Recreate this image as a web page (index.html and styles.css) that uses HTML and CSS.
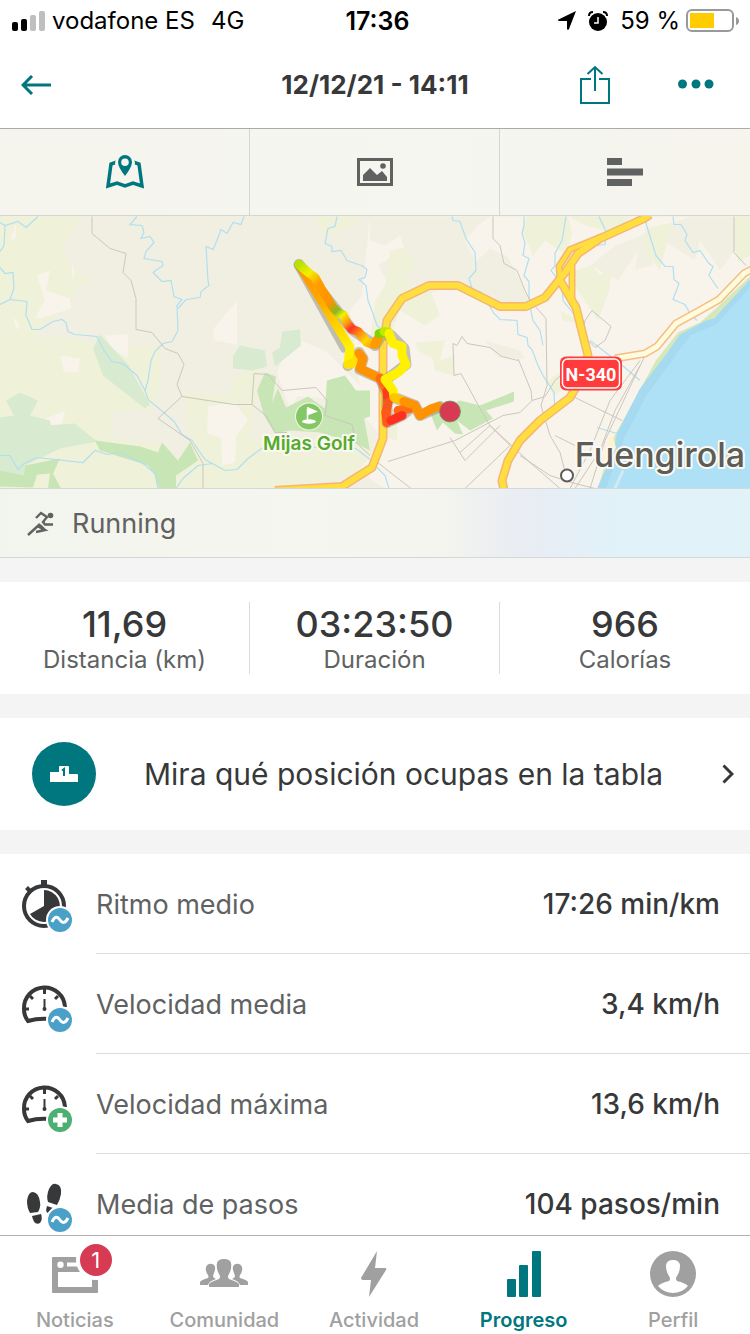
FILE: index.html
```html
<!DOCTYPE html>
<html lang="es">
<head>
  <meta charset="UTF-8" />
  <meta name="viewport" content="width=device-width, initial-scale=1.0"/>
  <title>12/12/21 - 14:11</title>
  <link rel="stylesheet" href="styles.css">
</head>
<body>

  <div class="status-bar">
    <div class="status-left">
      <svg width="34" height="20" viewBox="0 0 34 20">
        <rect x="0" y="11" width="6" height="9" rx="2"/>
        <rect x="9" y="8" width="6" height="12" rx="2"/>
        <rect x="18" y="4" width="6" height="16" rx="2" fill="#bfbfbf"/>
        <rect x="27" y="0" width="6" height="20" rx="2" fill="#bfbfbf"/>
      </svg>
      <span class="carrier">vodafone ES</span>
      <span>4G</span>
    </div>
    <div class="status-time">17:36</div>
    <div class="status-right">
      <svg width="18" height="19" viewBox="0 0 18 19"><path d="M18 0L11 18Q9.500 20 9 17.500V10H1Q-1 9.500 .500 8.500Z"/></svg>
      <svg width="20" height="20" viewBox="0 0 20 20">
        <circle cx="10" cy="11" r="9"/>
        <path d="M1 5Q1 1 5 1M19 5Q19 1 15 1" fill="none" stroke="#000" stroke-width="2"/>
        <path d="M10 6V12H6" fill="none" stroke="#fff" stroke-width="1.500"/>
      </svg>
      <span>59 %</span>
      <svg class="battery" width="53" height="24" viewBox="0 0 53 24">
        <rect x="1" y="1" width="46" height="21" rx="5" fill="none" stroke="#999" stroke-width="2"/>
        <rect x="4" y="4" width="24" height="15" fill="#ffcc00"/>
        <path d="M50 8Q53 9 53 12T50 16Z" fill="#999"/>
      </svg>
    </div>
  </div>

  <header class="header">
    <button type="button" class="icon-btn back-btn" aria-label="Atrás">
      <svg width="30" height="20" viewBox="0 0 30 20"><path d="M30 10H2M11 1L2 10l9 9" fill="none" stroke="currentColor" stroke-width="3"/></svg>
    </button>
    <h1>12/12/21 - 14:11</h1>
    <div class="header-actions">
      <button type="button" class="icon-btn" aria-label="Compartir">
        <svg width="30" height="40" viewBox="0 0 30 40"><path d="M11 14H1V38H29V14H19M15 26V2M7.500 9L15 2l7.500 7" fill="none" stroke="currentColor" stroke-width="2"/></svg>
      </button>
      <button type="button" class="icon-btn" aria-label="Más">
        <svg width="36" height="40" viewBox="0 0 36 40" fill="currentColor"><circle cx="4.500" cy="19" r="4.500"/><circle cx="18" cy="19" r="4.500"/><circle cx="31" cy="19" r="4.500"/></svg>
      </button>
    </div>
  </header>

  <main class="content">
    <section class="map">
      <svg class="map-canvas" viewBox="0 128 750 430" preserveAspectRatio="xMidYMid slice">
        <defs>
          <linearGradient id="leg" gradientUnits="userSpaceOnUse" x1="300" y1="265" x2="350" y2="347">
            <stop offset="0" stop-color="#ff9200"/><stop offset=".4" stop-color="#ffa800"/><stop offset="1" stop-color="#fff200"/>
          </linearGradient>
          <linearGradient id="out" gradientUnits="userSpaceOnUse" x1="299" y1="264" x2="375" y2="345">
            <stop offset="0" stop-color="#b5e300"/><stop offset=".12" stop-color="#f4ee00"/><stop offset=".24" stop-color="#ff9e00"/>
            <stop offset=".44" stop-color="#ff9200"/><stop offset=".54" stop-color="#86bd20"/><stop offset=".6" stop-color="#f4f000"/>
            <stop offset=".68" stop-color="#ff9a10"/><stop offset=".74" stop-color="#ff3228"/><stop offset=".82" stop-color="#ff8a10"/>
            <stop offset=".91" stop-color="#ffd800"/><stop offset="1" stop-color="#ff9a00"/>
          </linearGradient>
        </defs>

        <!-- land -->
        <rect y="128" width="750" height="430" fill="#f1efe2"/>
        <g fill="#eff1d9">
          <path d="M0 216H80L72 232 62 243 70 265 91 280 78 288 62 312 42 326 30 345 60 335 110 348 160 345 160 385 152 410 110 412 95 440 60 430 0 450Z"/>
          <path d="M0 325L50 340 105 342 150 410 190 420 185 395 240 372 262 350 250 440 285 440 370 425 372 470 275 488H0Z"/>
          <path d="M315 216H360L352 226 330 235 320 232Z"/>
        </g>
        <g fill="#f8f4ec">
          <path d="M370 216H750V488H385L358 470 385 440 350 400 290 395 278 370 300 340 325 350 360 385 350 310 362 295Z"/>
          <path d="M212 330L237 300V344L215 340Z"/>
          <path d="M37 275L50 270 46 290 70 298 71 308 40 318 35 317 45 300Z"/>
          <path d="M12 315L20 325 17 330ZM16 222V238L10 240ZM72 263L75 272 72 279Z"/>
          <path d="M105 335L128 334V358L112 348ZM60 355L80 358 78 372 64 372ZM30 425L65 410 62 425Z"/>
          <path d="M208 406L235 402 248 420 236 436 235 462 222 465 221 437 207 433Z"/>
          <path d="M277 372L290 342 310 349 322 370 305 380 290 410Z"/>
        </g>
        <g fill="#f1efe2">
          <path d="M370 216H490L478 225 465 240 475 260 450 280 405 250 400 235 385 245 370 240Z"/>
          <path d="M378 265L410 245 475 262 490 248 508 256 530 300 510 307 450 285 400 305Z"/>
          <path d="M616 245L690 216H745V235L720 270 700 240 695 260 655 235 652 265 635 269 638 250 618 280 590 265Z"/>
          <path d="M190 345H270L258 366 234 376 228 396 185 392Z"/>
          <path d="M115 410L150 408 185 395 190 445 178 460 160 442 110 440Z"/>
          <path d="M485 340L520 350 525 358 498 357Z"/>
        </g>
        <g fill="#eff1d9">
          <path d="M375 300L385 285 390 250 405 247 417 265 405 275 412 295 430 288 440 315 425 325 400 310 392 330 380 355 370 340Z"/>
          <path d="M527 216H568L572 232 567 255 545 240 533 255 522 230ZM570 216H632L612 232 585 225Z"/>
          <path d="M575 270L592 265 600 275 612 268 609 290 598 320 575 285ZM560 310L575 318 577 322 563 320Z"/>
          <path d="M645 228L672 222 660 270 645 250ZM735 216H750V255L738 262 733 240Z"/>
          <path d="M415 342L445 340 440 360 455 355 453 375 435 370 433 358 418 350ZM385 410L398 410 397 440 388 437ZM548 380L570 365 570 385 553 395Z"/>
        </g>
        <g fill="#d8ebd0">
          <path d="M93 348L100 334 128 364 150 404 145 408 103 375Z"/>
          <path d="M6 400L20 392 38 400 30 415 50 420 51 425 30 426 75 423 97 441 60 448 25 465 24 478 0 486V417L14 415Z"/>
          <path d="M233 355L240 345 265 350 267 366 252 370 233 368ZM282 331L300 329 301 345 275 366 272 352 280 347Z"/>
        </g>
        <g fill="#c8e5b6">
          <path d="M95 440L140 446 158 452 162 442 178 460 190 442 198 460 176 475 176 488H159L155 475 148 465 100 450Z"/>
          <path d="M0 470L24 475 25 465 60 458 53 473 61 488H48L50 473 37 474 33 487 0 486Z"/>
          <path d="M257 390L265 372 276 376 272 402 278 388 286 407 308 396 325 408 327 380 345 375 356 390 370 390V416L364 418 370 450 354 442 320 432 290 430 275 433 264 415Z"/>
          <path d="M430 412L460 400 480 405 514 391 514 401 486 410 493 418 470 430 457 420 463 434 455 433 443 422 437 430Z"/>
        </g>

        <!-- sea and beach -->
        <path d="M750 276L716 308 700 322 678 332 656 360 634 400 612 440 598 488H606L625 440 650 390 680 338 705 326 750 285Z" fill="#d5e8b8"/>
        <path d="M750 279L714 318 706 320 680 334 666 354 640 388 617 433 612 455 597 488H750Z" fill="#a6daf0"/>
        <path d="M750 287L716 324 690 335 672 360 647 394 624 438 606 488H750Z" fill="#aee0f6"/>
        <path d="M612 432L616 447 610 462 598 470Z" fill="#fdf3cf"/>
        <path d="M623 470L615 488" stroke="#d5eaf0" stroke-width="3"/>

        <!-- rivers -->
        <g fill="none" stroke="#b0dff0" stroke-width="1.200">
          <path d="M38 216L26 227 18 221 5 225 0 222M5 225L4 245 0 251M0 267L5 273 13 272 14 288 10 299 0 304M10 299L27 301 26 315 32 329H40L53 321 62 319 66 322 68 331 75 334 97 336 104 350 112 361 123 363 137 375 145 390 148 399 165 413 174 421 182 434 192 440 205 459 225 470 237 469 248 458 263 447 285 440 320 448 356 448 370 459"/>
          <path d="M137 216L130 224 142 225 144 232 141 238 150 236 154 242 146 251 144 258 162 261 163 265 153 272 162 281 171 280 174 296 182 299 177 305 178 330 172 341 163 343 155 351 151 360 148 380 145 390"/>
          <path d="M244 216L241 224 233 222 227 233 221 229 217 240 213 249 206 246 208 280 209 285 201 291 200 297 186 299 178 308"/>
          <path d="M337 216L335 226 328 228 325 243 332 246 332 251 341 250 347 260 358 264 362 265 367 269 365 277 359 279 366 285 368 300 373 313 377 325 388 335M388 335L380 340 383 360 378 372"/>
          <path d="M0 455H10L18 469 24 463 37 457 83 462 95 450 107 454 120 452 143 463 155 473 158 488M176 488L183 478 198 465 213 463"/>
          <path d="M452 216L453 220 460 221 466 238 475 252 476 270 469 278 472 288 481 292 484 296 494 313 500 319 517 320 518 334 527 337 528 345 532 349 538 365 543 375 554 392 555 412"/>
          <path d="M524 216V225L522 233 525 242 523 255 529 258 524 275 529 281 529 295 531 311 533 320 540 330 543 345M566 216L562 240 555 253V265L551 270 562 285 563 300 575 315M599 216L606 231 605 244 596 245"/>
          <path d="M644 216L650 236 656 255 665 266 673 266 674 279 679 283 673 299 685 304 690 313 697 320M673 216L674 224 681 224 687 234 685 240 693 252 700 250 709 263 713 266 709 275 718 288"/>
          <path d="M590 340L620 363 640 380M597 427L617 433M375 465L385 475 389 488"/>
        </g>

        <!-- minor roads -->
        <g fill="none" stroke="#cbc7bd" stroke-width="1">
          <path d="M92 216V233L110 248 126 253 123 272 131 280 136 298V329L152 332 165 348 178 353 184 364 177 384 182 396 234 404 252 404 254 373 268 374 282 390 316 387 327 400 325 415 352 424 356 442 370 455"/>
          <path d="M182 396L158 418 190 440 203 463 203 488M252 404L266 415 275 432H287"/>
          <path d="M493 216V238L500 245 504 263 517 270 525 290 530 300 546 318 547 385 541 405 550 435 560 452 566 475"/>
          <path d="M457 345L453 343 454 375 461 373 480 408 490 425 530 462 560 488M518 358L531 390 532 400 545 396 555 380 580 358"/>
          <path d="M457 345L462 336 467 343 490 347 502 356 518 360M532 400L520 412 503 415 455 440 388 461M375 460L411 488M450 437L465 460 500 425M460 452L490 425M490 425L510 445 465 488"/>
          <path d="M520 455L550 475 575 483 595 488M575 397L622 420M555 435L575 445M640 360L610 400 590 450 570 488M640 365L615 410 600 450 575 488M645 355L626 395 605 440 590 488"/>
          <path d="M585 320L592 310 611 326 605 340 595 347 583 335ZM734 216V252L746 265"/>
        </g>

        <!-- coast road -->
        <g fill="none" stroke-linejoin="round">
          <path d="M755 267L744 273 719 299 698 311 676 323 657 346 645 353 615 358" stroke="#f4bd83" stroke-width="8"/>
          <path d="M755 267L744 273 719 299 698 311 676 323 657 346 645 353 615 358" stroke="#fffbdc" stroke-width="5"/>
        </g>

        <!-- motorways -->
        <g fill="none" stroke-linejoin="round">
          <g stroke="#f5b573" stroke-width="9">
            <path d="M275 490L342 486 372 467 383 438V345L387 320 402 298 429 285H458L500 306H526L545 297 565 272 578 253 600 238 644 218 650 214"/>
            <path d="M560 280L576 307 588 355 580 380 570 397 540 420 520 440 508 460 502 480 504 490"/>
          </g>
          <path d="M560 280L559 266 570 249 602 236M572 265V298" stroke="#f5b573" stroke-width="7"/>
          <g stroke="#ffde3e" stroke-width="6">
            <path d="M275 490L342 486 372 467 383 438V345L387 320 402 298 429 285H458L500 306H526L545 297 565 272 578 253 600 238 644 218 650 214"/>
            <path d="M560 280L576 307 588 355 580 380 570 397 540 420 520 440 508 460 502 480 504 490"/>
          </g>
          <path d="M560 280L559 266 570 249 602 236M572 265V298" stroke="#ffde3e" stroke-width="4"/>
        </g>

        <!-- recorded track, coloured by speed -->
        <g fill="none" stroke-linecap="round" stroke-linejoin="round" stroke-width="9">
          <path d="M298 265L344 348" stroke="#bfbcb1" stroke-width="8"/>
          <path d="M299 264L327 298 352 329 375 345 382 334 391 335 404 348 406 364 385 380 394 397 415 405 420 415 440 406M348 365L359 352 363 358 360 369 380 378 387 393V422L402 415 410 408" stroke="#8d8a82" stroke-opacity=".5" stroke-width="11"/>
          <path d="M299 264L350 347 348 364" stroke="url(#leg)"/>
          <path d="M348 364L355 362 359 353" stroke="#ffe000"/>
          <path d="M359 353L363 358 360 368 380 378" stroke="#ff9200"/>
          <path d="M380 378L387 390" stroke="#ff6a12"/>
          <path d="M387 391L388 402" stroke="#ff3a20"/>
          <path d="M388 402L386 412" stroke="#f8581c"/>
          <path d="M386 412L387 422" stroke="#ff5818"/>
          <path d="M410 408L398 410 402 415" stroke="#ff6a12"/>
          <path d="M402 415L391 420" stroke="#ff3020"/>
          <path d="M299 264L307 271 315 277 321 288 327 297 333 307 339 313 343 314 347 323 352 329 358 331 363 337 367 342 375 344" stroke="url(#out)"/>
          <path d="M375 344L378 338" stroke="#ff9a00"/>
          <path d="M379 333L383 332" stroke="#7dd500"/>
          <path d="M384 331L389 332" stroke="#bde800"/>
          <path d="M389 333L393 343 402 346V355L406 364 398 372 385 379 393 390 394 396" stroke="#fff200"/>
          <path d="M394 397L402 400" stroke="#ffc400"/>
          <path d="M404 401L415 405 420 415 432 408 439 406" stroke="#ff9200"/>
          <circle cx="450" cy="411" r="10.500" fill="#d73a53" stroke="#6f9360" stroke-width=".8"/>
        </g>

        <!-- places -->
        <circle cx="309" cy="416" r="14" fill="#f3f6e6"/>
        <circle cx="309" cy="416" r="13" fill="#84c765"/>
        <path d="M307.500 408V421M308 407.500L316 411 308 414Z" fill="#fff" stroke="#fff" stroke-width="1.500"/>
        <ellipse cx="309" cy="421" rx="7" ry="2.200" fill="#fff"/>
        <text class="map-label golf" x="309" y="449">Mijas Golf</text>
        <rect x="560" y="356" width="62" height="34" rx="6" fill="#ff3b3b"/>
        <rect x="562.500" y="358.500" width="57" height="29" rx="5" fill="none" stroke="#fff" stroke-width="1.500"/>
        <text class="map-label road" x="591" y="380">N-340</text>
        <circle cx="567" cy="475" r="6" fill="#fff" stroke="#5d5c56" stroke-width="2"/>
        <text class="map-label city" x="660" y="466">Fuengirola</text>
      </svg>

      <nav class="view-tabs">
        <button type="button" class="active" aria-label="Mapa">
          <svg width="38" height="36" viewBox="0 0 38 36" fill="currentColor">
            <path d="M11 8L5 10 2 32 11 29 19 32 27 29 36 32 33 10 27 8" fill="none" stroke="currentColor" stroke-width="3.500"/>
            <path d="M19 -1A10 10 0 0 0 9 9Q9 15 19 26Q29 15 29 9A10 10 0 0 0 19 -1" fill="#f5f5ef"/>
            <path fill-rule="evenodd" d="M19 1A7 7 0 0 0 12 8Q12 13 19 22Q26 13 26 8A7 7 0 0 0 19 1M19 4.500a3.800 3.800 0 1 1 0 7.600a3.800 3.800 0 1 1 0-7.600"/>
          </svg>
        </button>
        <button type="button" aria-label="Fotos">
          <svg width="36" height="28" viewBox="0 0 36 28" fill="currentColor">
            <path d="M1.500 1.500H34.500V26.500H1.500Z" fill="none" stroke="currentColor" stroke-width="3"/>
            <path d="M6 23V17L13 10 20 17 25 13 30 19V23Z"/><circle cx="26" cy="8" r="2.800"/>
          </svg>
        </button>
        <button type="button" aria-label="Detalles">
          <svg width="36" height="28" viewBox="0 0 36 28" fill="currentColor"><path d="M0 0H15V7H0ZM0 10.500H36V17.500H0ZM0 21H25V28H0Z"/></svg>
        </button>
      </nav>
      <div class="activity-type">
        <svg width="28" height="26" viewBox="0 0 28 26" fill="none" stroke="currentColor" stroke-width="2.400">
          <path d="M9 8L14 3 20 7 16 12 18 14.500H26M1 25L13 14M10 16L18 20 9 22M13 15L18 20"/><circle cx="23.500" cy="5.500" r="2.800" fill="currentColor" stroke="none"/>
        </svg>
        <span>Running</span>
      </div>
    </section>

    <dl class="stats">
      <div class="stat"><dt>Distancia (km)</dt><dd>11,69</dd></div>
      <div class="stat"><dt>Duración</dt><dd>03:23:50</dd></div>
      <div class="stat"><dt>Calorías</dt><dd>966</dd></div>
    </dl>

    <a class="ranking" href="#tabla">
      <span class="ranking-icon">
        <svg width="28" height="16" viewBox="0 0 28 16"><path d="M0 16V6H9V1Q9 0 10 0H18Q19 0 19 1V8H27Q28 8 28 9V16Z" fill="#fff"/><path d="M12 4.500L14 3V10" fill="none" stroke="#00777f" stroke-width="2"/></svg>
      </span>
      <span class="ranking-text">Mira qué posición ocupas en la tabla</span>
      <svg width="12" height="20" viewBox="0 0 12 20"><path d="M1.500 1.500L10 10l-8.500 8.500" fill="none" stroke="#373839" stroke-width="3"/></svg>
    </a>

    <dl class="metrics">
      <div class="metric">
        <svg width="54" height="56" viewBox="0 0 54 56">
          <circle cx="24" cy="30" r="20" fill="none" stroke="#373839" stroke-width="4"/>
          <path d="M21 4H27V10H21ZM5 13L8 10 12 14 9 17Z" fill="#373839"/>
          <path d="M24 30V14A16 16 0 1 1 10 38Z" fill="#373839"/>
          <circle cx="40" cy="44" r="14" fill="#fff"/><circle cx="40" cy="44" r="12" fill="#4ba0c8"/>
          <path d="M32 46C35 39 38 41 40 44S45 48 48 42" fill="none" stroke="#fff" stroke-width="3"/>
        </svg>
        <dt>Ritmo medio</dt><dd>17:26 min/km</dd>
      </div>
      <div class="metric">
        <svg width="54" height="56" viewBox="0 0 54 56">
          <g fill="none" stroke="#373839">
            <path d="M30 43Q18 42 8 45Q4 40 4 33A20.500 20.500 0 0 1 45 31" stroke-width="4"/>
            <path d="M24.500 13V18M10 20L13 23M38 20L35 23M4 33H9M41 33H45" stroke-width="3"/>
            <path d="M24.500 23V34" stroke-width="2"/>
          </g>
          <circle cx="24.500" cy="33" r="2" fill="#373839"/>
          <circle cx="40" cy="44" r="14" fill="#fff"/><circle cx="40" cy="44" r="12" fill="#4ba0c8"/>
          <path d="M32 46C35 39 38 41 40 44S45 48 48 42" fill="none" stroke="#fff" stroke-width="3"/>
        </svg>
        <dt>Velocidad media</dt><dd>3,4 km/h</dd>
      </div>
      <div class="metric">
        <svg width="54" height="56" viewBox="0 0 54 56">
          <g fill="none" stroke="#373839">
            <path d="M30 43Q18 42 8 45Q4 40 4 33A20.500 20.500 0 0 1 45 31" stroke-width="4"/>
            <path d="M24.500 13V18M10 20L13 23M38 20L35 23M4 33H9M41 33H45" stroke-width="3"/>
            <path d="M24.500 23V34" stroke-width="2"/>
          </g>
          <circle cx="24.500" cy="33" r="2" fill="#373839"/>
          <circle cx="40" cy="44" r="14" fill="#fff"/><circle cx="40" cy="44" r="12" fill="#4bb071"/>
          <path d="M40 37V51M33 44H47" stroke="#fff" stroke-width="5"/>
        </svg>
        <dt>Velocidad máxima</dt><dd>13,6 km/h</dd>
      </div>
      <div class="metric">
        <svg width="54" height="56" viewBox="0 0 54 56">
          <g fill="#373839">
            <path d="M10 37Q7 32 7 25Q8 16 13 16Q19 17 20 26Q21 31 18 36Z"/>
            <path d="M12 40L21 38Q23 43 20 47Q14 50 12 40Z"/>
            <path d="M28 26Q26 20 29 13Q32 7 36 8Q42 9 41 18Q40 24 37 29Z"/>
            <path d="M27 30L33 32 28 37Q25 36 27 30Z"/>
          </g>
          <circle cx="40" cy="44" r="14" fill="#fff"/><circle cx="40" cy="44" r="12" fill="#4ba0c8"/>
          <path d="M32 46C35 39 38 41 40 44S45 48 48 42" fill="none" stroke="#fff" stroke-width="3"/>
        </svg>
        <dt>Media de pasos</dt><dd>104 pasos/min</dd>
      </div>
    </dl>
  </main>

  <nav class="tab-bar">
    <a href="#noticias">
      <span class="tab-icon">
        <svg width="46" height="46" viewBox="0 0 46 46">
          <path fill-rule="evenodd" fill="currentColor" d="M1 6H45Q46 6 46 7V41Q46 42 45 42H1Q0 42 0 41V7Q0 6 1 6M6 21V36H40V21ZM15 11.500V15.500H40V11.500ZM8.500 10.500a3.200 3.200 0 1 0 0 6.400a3.200 3.200 0 1 0 0-6.400"/>
        </svg>
        <span class="badge">1</span>
      </span>
      Noticias
    </a>
    <a href="#comunidad">
      <svg width="48" height="46" viewBox="0 0 48 46" fill="currentColor">
        <path d="M0 34V31Q1 29 8 27Q9 26 8 24Q5 20 6 16Q8 12 12 13Q16 14 15 19L13 25Q13 27 16 28Q9 30 8 34Z"/>
        <path d="M48 34V31Q47 29 40 27Q39 26 40 24Q43 20 42 16Q40 12 36 13Q32 14 33 19L35 25Q35 27 32 28Q39 30 40 34Z"/>
        <path d="M9 36V33Q10 31 19 28Q21 26 19 23Q16 18 17 12Q18 8 24 8Q30 8 31 12Q32 18 29 23Q27 26 29 28Q38 31 39 33V36Z"/>
      </svg>
      Comunidad
    </a>
    <a href="#actividad">
      <svg width="28" height="46" viewBox="0 0 28 46" fill="currentColor"><path d="M17 0L1 27Q1 29 3 29H11L9 46 26 19Q27 17 25 17H15Z"/></svg>
      Actividad
    </a>
    <a href="#progreso" class="active">
      <svg width="34" height="46" viewBox="0 0 34 46" fill="currentColor"><rect y="28" width="9" height="18" rx="1"/><rect x="12" y="14" width="9" height="32" rx="1"/><rect x="25" width="9" height="46" rx="1"/></svg>
      Progreso
    </a>
    <a href="#perfil">
      <svg width="46" height="46" viewBox="0 0 46 46">
        <circle cx="23" cy="23" r="23" fill="currentColor"/>
        <path d="M8 35Q11 32 19 30Q21 28 19 25Q16 21 16 14Q17 9 23 9Q29 9 30 14Q30 21 27 25Q25 28 27 30Q35 32 38 35Q32 42 23 42T8 35Z" fill="#fff"/>
      </svg>
      Perfil
    </a>
  </nav>

</body>
</html>
```
FILE: styles.css
```css
* {
  box-sizing: border-box;
}

body {
  font-family: Inter, "Liberation Sans", sans-serif;
  background: #fff;
  color: #373839;
  margin: 0;
  height: 100vh;
  display: flex;
  flex-direction: column;
}

svg {
  display: block;
  flex-shrink: 0;
}

button {
  background: none;
  border: none;
  padding: 0;
  font: inherit;
  color: inherit;
  cursor: pointer;
}

a {
  color: inherit;
  text-decoration: none;
}

dl, dd {
  margin: 0;
}

/* status bar */
.status-bar {
  display: grid;
  grid-template-columns: 1fr auto 1fr;
  align-items: center;
  height: 41px;
  padding: 0 11px 0 12px;
  font-size: 24px;
  color: #000;
}

.status-left, .status-right {
  display: flex;
  align-items: center;
}

.status-left {
  gap: 6px;
}

.carrier {
  margin-right: 10px;
}

.status-time {
  padding-left: 4px;
  font-size: 25px;
  font-weight: 600;
}

.status-right {
  justify-content: flex-end;
  gap: 12px;
}

.battery {
  margin-left: -6px;
}

/* header */
.header {
  display: grid;
  grid-template-columns: 1fr auto 1fr;
  align-items: center;
  height: 88px;
  padding: 0 36px 0 21px;
  border-bottom: 1px solid #aaa;
}

.header h1 {
  margin: 0;
  padding-left: 15px;
  font-size: 26px;
  font-weight: 700;
}

.icon-btn {
  color: #00777f;
}

.back-btn {
  justify-self: start;
}

.header-actions {
  display: flex;
  justify-content: flex-end;
  gap: 68px;
}

.content {
  flex: 1;
  min-height: 0;
  overflow-y: auto;
  scrollbar-width: none;
  background: #f4f4f4;
}

/* map */
.map {
  position: relative;
  display: grid;
  grid-template-rows: 87px 272px 70px;
}

.map-canvas {
  position: absolute;
  top: 0;
  left: 0;
  width: 100%;
  height: 100%;
}

.map-label {
  text-anchor: middle;
  paint-order: stroke;
  stroke: #fbf9f3;
  stroke-width: 4px;
  stroke-linejoin: round;
}

.golf {
  font-size: 19px;
  font-weight: 600;
  fill: #55ab2c;
}

.road {
  font-family: Roboto, sans-serif;
  font-size: 18px;
  font-weight: 700;
  fill: #fff;
  stroke: none;
}

.city {
  font-size: 34px;
  font-weight: 500;
  fill: #5d5c56;
}

.view-tabs {
  position: relative;
  display: grid;
  grid-template-columns: repeat(3, 1fr);
  background: linear-gradient(to right, #f5f5ee, #f6f6f0 60%, #f4f5ef 75%, #f7f4ec);
  border-bottom: 1px solid #d6d6d1;
}

.view-tabs button {
  display: flex;
  align-items: center;
  justify-content: center;
  color: #606262;
}

.view-tabs button:not(:last-child) {
  border-right: 1px solid #d6d6d1;
}

.view-tabs .active {
  color: #00777f;
}

.activity-type {
  position: relative;
  grid-row: 3;
  display: flex;
  align-items: center;
  gap: 17px;
  padding: 0 27px;
  font-size: 27px;
  color: #606262;
  background: linear-gradient(to right, #f2f5ed, #f5f6ef 40%, #f4f5ee 58%, #e9ecf3 70%, #e1f2f9 82%);
  border-top: 1px solid #d5d9d6;
  border-bottom: 1px solid #d5d9d6;
}

/* summary */
.stats {
  display: grid;
  grid-template-columns: repeat(3, 1fr);
  margin-top: 24px;
  padding: 20px 0;
  background: #fff;
}

.stat {
  display: flex;
  flex-direction: column-reverse;
  height: 72px;
  text-align: center;
}

.stat:not(:last-child) {
  border-right: 1px solid #dcdcdc;
}

.stat dt {
  font-size: 24px;
  line-height: 28px;
  color: #606262;
}

.stat dd {
  font-size: 36px;
  font-weight: 500;
  line-height: 44px;
}

.ranking {
  display: flex;
  align-items: center;
  height: 112px;
  margin: 24px 0;
  padding: 0 16px 0 32px;
  background: #fff;
}

.ranking-icon {
  display: flex;
  align-items: center;
  justify-content: center;
  width: 64px;
  height: 64px;
  border-radius: 50%;
  background: #00777f;
}

.ranking-text {
  flex: 1;
  padding-left: 48px;
  font-size: 30px;
}

/* metrics */
.metrics {
  background: #fff;
}

.metric {
  display: grid;
  grid-template-columns: 76px 1fr auto;
  align-items: center;
  height: 100px;
  padding: 0 30px 0 20px;
  font-size: 27px;
  background: linear-gradient(#dcdcdc, #dcdcdc) 96px 100% / 100% 1px no-repeat;
}

.metric dt {
  color: #606262;
}

.metric dd {
  font-size: 28px;
  font-weight: 500;
}

/* bottom navigation */
.tab-bar {
  display: grid;
  grid-template-columns: repeat(5, 1fr);
  height: 99px;
  padding-right: 2px;
  border-top: 1px solid #b2b2b2;
  background: #fff;
}

.tab-bar a {
  display: flex;
  flex-direction: column;
  align-items: center;
  gap: 11px;
  padding-top: 15px;
  font-size: 20px;
  font-weight: 500;
  color: #a0a0a0;
}

.tab-bar .active {
  color: #00777f;
  font-weight: 600;
}

.tab-icon {
  position: relative;
}

.badge {
  position: absolute;
  top: -11px;
  right: -18px;
  width: 40px;
  height: 40px;
  border: 4px solid #fff;
  border-radius: 50%;
  background: #d73a53;
  color: #fff;
  font-size: 22px;
  font-weight: 400;
  line-height: 32px;
  text-align: center;
}
```
